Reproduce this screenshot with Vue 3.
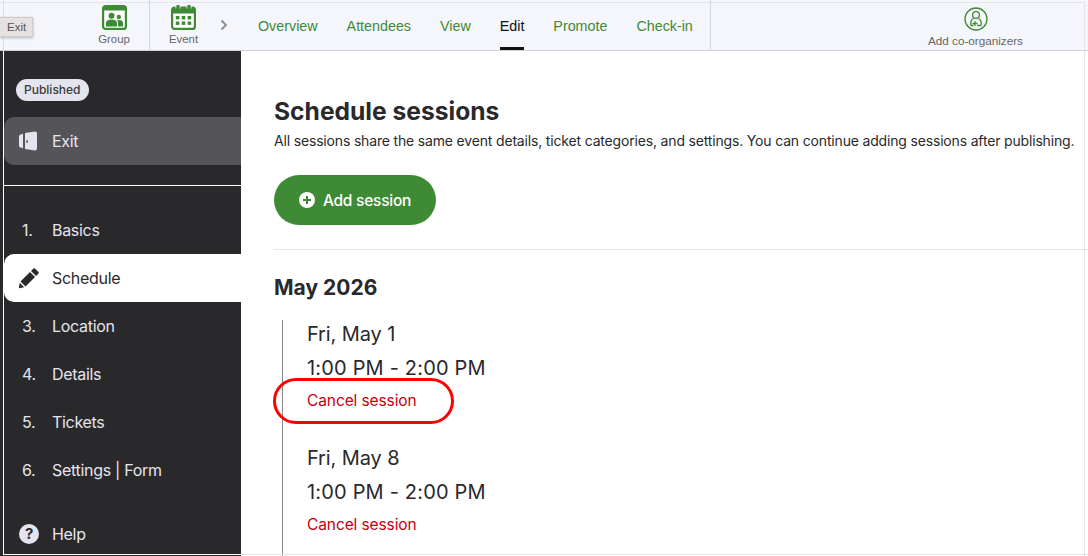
<script setup>
const tabs = [
  { label: 'Overview' },
  { label: 'Attendees' },
  { label: 'View' },
  { label: 'Edit', active: true },
  { label: 'Promote' },
  { label: 'Check-in' }
]
const steps = [
  { n: '3.', label: 'Location' },
  { n: '4.', label: 'Details' },
  { n: '5.', label: 'Tickets' },
  { n: '6.', label: 'Settings | Form' }
]
const sessions = [{ date: 'Fri, May 1', ring: true }, { date: 'Fri, May 8', ring: false }]
</script>

<template>
  <div class="page">
    <header class="topbar">
      <div class="tip">Exit</div>
      <div class="crumb crumb-group">
        <svg class="crumb-icon" width="25" height="25" viewBox="0 0 25 25">
          <rect x="1.100" y="1.100" width="22.800" height="22.800" rx="2.500" fill="#fff" stroke="#3f8a34" stroke-width="2.200" />
          <rect x="1" y="1" width="23" height="4.500" rx="2" fill="#3f8a34" />
          <circle cx="9.500" cy="10.800" r="3" fill="#3f8a34" />
          <circle cx="16.800" cy="12" r="2.200" fill="#3f8a34" />
          <path d="M16 21.500v-4c0-1-.4-1.600-1-2.100.7-.3 1.400-.4 2.200-.4 2.400 0 3.800 1.100 3.800 2.800v3.700z" fill="#3f8a34" />
          <path d="M4 21.500v-3.600c0-2 1.800-3.300 5.500-3.300s5.500 1.300 5.500 3.300v3.600z" fill="#3f8a34" />
        </svg>
        <span>Group</span>
      </div>
      <div class="crumb crumb-event">
        <svg class="crumb-icon" width="25" height="25" viewBox="0 0 25 25">
          <rect x="1.100" y="2.600" width="22.800" height="21.300" rx="2.500" fill="#fff" stroke="#3f8a34" stroke-width="2.200" />
          <rect x="1" y="2" width="23" height="6.500" rx="1.500" fill="#3f8a34" />
          <rect x="4.500" y="0" width="1" height="3.500" fill="#f5f6fb" />
          <rect x="8.500" y="0" width="1" height="3.500" fill="#f5f6fb" />
          <rect x="15.500" y="0" width="1" height="3.500" fill="#f5f6fb" />
          <rect x="19.500" y="0" width="1" height="3.500" fill="#f5f6fb" />
          <rect x="5.500" y="0" width="3" height="4" fill="#3f8a34" />
          <rect x="16.500" y="0" width="3" height="4" fill="#3f8a34" />
          <g fill="#3f8a34">
            <rect x="4.800" y="11" width="3.600" height="3.400" />
            <rect x="10.700" y="11" width="3.600" height="3.400" />
            <rect x="16.600" y="11" width="3.600" height="3.400" />
            <rect x="4.800" y="16.500" width="3.600" height="3.400" />
            <rect x="10.700" y="16.500" width="3.600" height="3.400" />
            <rect x="16.600" y="16.500" width="3.600" height="3.400" />
          </g>
        </svg>
        <span>Event</span>
      </div>
      <svg class="chevron" width="8" height="12" viewBox="0 0 8 12">
        <path d="M1.500 1.500 6 6l-4.500 4.500" fill="none" stroke="#8a8a8a" stroke-width="1.800" />
      </svg>
      <nav class="tabs">
        <a v-for="t in tabs" :key="t.label" class="tab" :class="{ active: t.active }">{{ t.label }}</a>
      </nav>
      <div class="coorg">
        <svg width="24" height="24" viewBox="0 0 24 24" fill="none" stroke="#3f8a34" stroke-width="1.300">
          <circle cx="12" cy="12" r="11" />
          <circle cx="12" cy="8" r="3.400" />
          <path d="M9.500 11.500C7.500 12.500 6.800 14 6.800 16v1.500c0 .6.400 1 1 1h1.700" />
          <path d="M14.500 11.500c2 1 2.700 2.500 2.700 4.500v1.500c0 .6-.4 1-1 1h-3" />
          <path d="M8.500 16.500h5M11 14.200v4.600" />
        </svg>
        <span>Add co-organizers</span>
      </div>
    </header>

    <div class="body">
      <aside class="side">
        <div class="side-top">
          <span class="badge">Published</span>
          <div class="exit-row">
            <svg width="20" height="20" viewBox="0 0 20 20" fill="#e4e4ee">
              <path d="M2.500 3.500 5 2.800v14.400l-2.500-.7q-1.500-.5-1.500-1.500V5q0-1 1.500-1.500z" />
              <path d="M7 2 17 .5q2 0 2 2v15q0 2-2 2L7 18z" />
              <rect x="8.500" y="9" width="1.200" height="3" fill="#444" />
            </svg>
            <span>Exit</span>
          </div>
        </div>
        <ul class="steps">
          <li class="step"><span class="num">1.</span>Basics</li>
          <li class="step current">
            <svg class="num-icon" width="22" height="22" viewBox="0 0 22 22" fill="#29292b">
              <path d="M15.500 1.500a1 1 0 0 1 1.400 0l3.600 3.600a1 1 0 0 1 0 1.400l-2.500 2.500-5-5z" />
              <path d="M12 5l5 5L7.500 19.500l-5-5z" />
              <path d="M1.800 15.800l4.400 4.400-5.400 1z" />
            </svg>
            Schedule
          </li>
          <li v-for="s in steps" :key="s.n" class="step"><span class="num">{{ s.n }}</span>{{ s.label }}</li>
        </ul>
        <div class="help">
          <svg class="num-icon" width="20" height="20" viewBox="0 0 20 20">
            <circle cx="10" cy="10" r="10" fill="#e4e4ee" />
            <text x="10" y="15" text-anchor="middle" class="qm">?</text>
          </svg>
          Help
        </div>
      </aside>

      <main class="main">
        <h1>Schedule sessions</h1>
        <p class="lede">All sessions share the same event details, ticket categories, and settings. You can continue adding sessions after publishing.</p>
        <button class="add">
          <svg width="16" height="16" viewBox="0 0 16 16">
            <circle cx="8" cy="8" r="8" fill="#fff" />
            <path d="M8 4v8M4 8h8" stroke="#3f8a34" stroke-width="2" />
          </svg>
          Add session
        </button>
        <hr />
        <h2>May 2026</h2>
        <div class="sessions">
          <div v-for="s in sessions" :key="s.date" class="session">
            <div class="line">{{ s.date }}</div>
            <div class="line time">1:00 PM - 2:00 PM</div>
            <a class="cancel">Cancel session<span v-if="s.ring" class="ring"></span></a>
          </div>
        </div>
        <div class="foot-line"></div>
      </main>
    </div>
    <div class="edge"></div>
  </div>
</template>

<style>
html, body { margin: 0; overflow: hidden; background: #fff; }
</style>

<style scoped>
.page {
  width: 1088px;
  height: 556px;
  overflow: hidden;
  position: relative;
  font-family: Inter, "Liberation Sans", sans-serif;
  color: #29292b;
}
.edge {
  position: absolute;
  left: 1084px;
  top: 2px;
  bottom: 0;
  width: 1px;
  background: #e4e4ea;
}
.topbar {
  height: 51px;
  box-sizing: border-box;
  border-bottom: 1px solid #d0d1d5;
  background: #f5f6fb;
  display: flex;
  align-items: stretch;
  font-family: "Liberation Sans", Arial, sans-serif;
  position: relative;
}
.topbar::before {
  content: "";
  position: absolute;
  left: 0;
  top: 2px;
  width: 1084px;
  height: 1px;
  background: #e4e5ea;
}
.topbar::after {
  content: "";
  position: absolute;
  left: 3px;
  top: 0;
  bottom: 0;
  width: 1px;
  background: #dcdde2;
}
.tip {
  position: absolute;
  left: 0;
  top: 17px;
  width: 33px;
  height: 20px;
  box-sizing: border-box;
  background: #e6e2e2;
  border: 1px solid #cfcccc;
  border-left: 0;
  box-shadow: 0 1px 3px rgba(0, 0, 0, .25);
  font-size: 11.500px;
  line-height: 19px;
  padding-left: 7px;
  color: #555;
  z-index: 1;
}
.crumb {
  display: flex;
  flex-direction: column;
  align-items: center;
  font-size: 11.400px;
  color: #666;
  padding-top: 5px;
  box-sizing: border-box;
  position: relative;
  z-index: 1;
}
.crumb-icon { display: block; margin-bottom: 3px; }
.crumb-group { width: 150px; padding-left: 79px; border-right: 1px solid #d5d6da; }
.crumb-event { width: 67px; }
.chevron { align-self: center; margin: 0 0 0 3px; }
.tabs {
  display: flex;
  gap: 29px;
  margin-left: 30px;
  width: 452px;
  border-right: 1px solid #d5d6da;
  font-size: 14.300px;
  flex-shrink: 0;
  position: relative;
  z-index: 1;
}
.tab {
  color: #3f8a34;
  line-height: 52px;
  height: 50px;
  box-sizing: border-box;
}
.tab.active {
  color: #111;
  border-bottom: 3px solid #111;
}
.coorg {
  flex: 1;
  padding-left: 152px;
  display: flex;
  flex-direction: column;
  align-items: center;
  font-size: 11.700px;
  color: #666;
  padding-top: 7px;
  gap: 3px;
  min-width: 0;
}
.body { display: flex; height: 505px; }
.side {
  width: 241px;
  flex-shrink: 0;
  height: 505px;
  box-sizing: border-box;
  background: #29292b;
  padding-left: 4px;
  color: #e4e4ee;
  font-size: 16px;
  letter-spacing: -.3px;
  display: flex;
  flex-direction: column;
  position: relative;
}
.side::before {
  content: "";
  position: absolute;
  left: 3px;
  top: 0;
  bottom: 1px;
  width: 1px;
  background: #fff;
}
.side::after {
  content: "";
  position: absolute;
  left: 3px;
  right: 0;
  bottom: 1px;
  height: 1px;
  background: #fff;
}
.side-top {
  height: 135px;
  box-sizing: border-box;
  padding-top: 28px;
  border-bottom: 1px solid #fff;
  flex-shrink: 0;
  margin-left: -1px;
  padding-left: 1px;
}
.badge {
  display: block;
  width: fit-content;
  margin-left: 12px;
  background: #e4e4ee;
  color: #3a3a3c;
  font-size: 12px;
  font-weight: 500;
  letter-spacing: 0;
  line-height: 22px;
  padding: 0 8px;
  border-radius: 11px;
}
.exit-row {
  margin-top: 16px;
  height: 48px;
  background: #545459;
  border-radius: 10px 0 0 10px;
  display: flex;
  align-items: center;
  padding-left: 14px;
  gap: 14px;
}
.steps {
  list-style: none;
  margin: 20px 0 0;
  padding: 0;
}
.step {
  height: 48px;
  display: flex;
  align-items: center;
  padding-left: 18px;
}
.num { width: 30px; flex-shrink: 0; }
.num-icon { margin-right: 14px; margin-left: -4px; flex-shrink: 0; }
.step.current .num-icon { margin-right: 12px; }
.step.current {
  background: #fff;
  color: #29292b;
  border-radius: 10px 0 0 10px;
}
.help {
  margin-top: 17px;
  height: 48px;
  display: flex;
  align-items: center;
  padding-left: 19px;
}
.help .num-icon { margin-left: -4px; margin-right: 13px; }
.qm { font: 700 15px Inter, sans-serif; fill: #29292b; }
.main {
  flex: 1;
  min-width: 0;
  padding: 45px 0 0 33px;
  white-space: nowrap;
  position: relative;
}
h1 {
  margin: 0;
  font-size: 24.600px;
  line-height: 30px;
  font-weight: 700;
}
.lede {
  margin: 4px 0 0;
  font-size: 14px;
  letter-spacing: -.17px;
  line-height: 22px;
}
.add {
  margin-top: 23px;
  height: 50px;
  width: 162px;
  border: 0;
  border-radius: 25px;
  background: #3f8a34;
  color: #fff;
  font: 500 15.500px Inter, sans-serif;
  letter-spacing: -.25px;
  display: flex;
  align-items: center;
  justify-content: center;
  gap: 8px;
  padding: 0;
}
hr {
  margin: 24px 0 0;
  border: 0;
  border-top: 1px solid #e4e4ee;
}
h2 {
  margin: 23px 0 0;
  font-size: 21px;
  line-height: 30px;
  font-weight: 700;
}
.sessions {
  margin: 17px 0 0 8px;
  border-left: 1px solid #8a8a8e;
  padding-left: 24px;
  display: flex;
  flex-direction: column;
}
.session { height: 124px; flex-shrink: 0; }
.session:first-child { margin-top: -3px; }
.line { font-size: 20px; line-height: 34px; letter-spacing: -.1px; }
.line.time { letter-spacing: .18px; }
.cancel {
  display: block;
  width: fit-content;
  position: relative;
  color: #c5000f;
  font-size: 15.500px;
  letter-spacing: -.1px;
  line-height: 32px;
}
.ring {
  position: absolute;
  left: -34px;
  top: -7px;
  width: 175px;
  height: 40px;
  border: 3.500px solid #f00;
  border-radius: 24px;
}
.foot-line {
  position: absolute;
  left: 0;
  right: 0;
  bottom: 1px;
  height: 1px;
  background: #e4e4ee;
}
</style>
